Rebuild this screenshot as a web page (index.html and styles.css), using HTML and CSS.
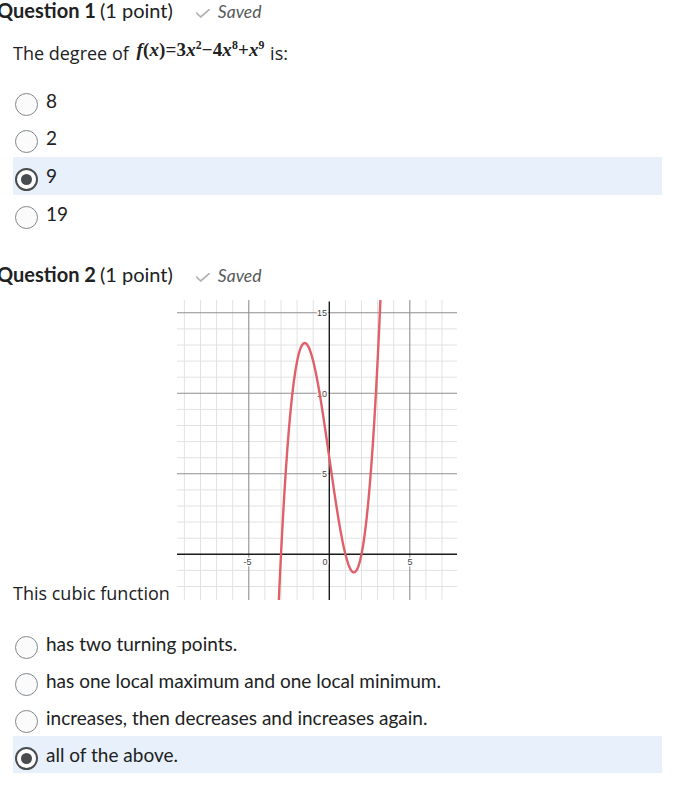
FILE: index.html
```html
<!DOCTYPE html>
<html lang="en">
<head>
<meta charset="utf-8">
<title>Quiz</title>
<link rel="stylesheet" href="styles.css">
</head>
<body>
<div class="page">
  <section class="question q1">
    <div class="q-header">
      <span class="q-title">Question 1</span> <span class="q-points">(1 point)</span>
      <span class="saved">
        <svg class="check" width="14" height="9" viewBox="0 0 14 9"><polyline points="0.8,4.2 4.6,8 13.2,0.6" fill="none" stroke="#b1b4b6" stroke-width="1.7" stroke-linecap="round" stroke-linejoin="round"/></svg>
        <span class="saved-text">Saved</span>
      </span>
    </div>
    <p class="stem">The degree of <span class="math"><i>f</i>(<i>x</i>)=3<i>x</i><sup>2</sup>−4<i>x</i><sup>8</sup>+<i>x</i><sup>9</sup></span> is:</p>
    <ul class="options">
      <li class="option"><span class="radio"></span><span class="label">8</span></li>
      <li class="option"><span class="radio"></span><span class="label">2</span></li>
      <li class="option selected"><span class="radio checked"></span><span class="label">9</span></li>
      <li class="option"><span class="radio"></span><span class="label">19</span></li>
    </ul>
  </section>

  <section class="question q2">
    <div class="q-header">
      <span class="q-title">Question 2</span> <span class="q-points">(1 point)</span>
      <span class="saved">
        <svg class="check" width="14" height="9" viewBox="0 0 14 9"><polyline points="0.8,4.2 4.6,8 13.2,0.6" fill="none" stroke="#b1b4b6" stroke-width="1.7" stroke-linecap="round" stroke-linejoin="round"/></svg>
        <span class="saved-text">Saved</span>
      </span>
    </div>
    <p class="stem graph-stem">This cubic function <svg class="graph" width="280" height="300" viewBox="0 0 280 300">
        <g class="minor" stroke="#e2e2e2" stroke-width="1">
          <line x1="7.4" y1="0" x2="7.4" y2="300"/>
          <line x1="23.5" y1="0" x2="23.5" y2="300"/>
          <line x1="39.6" y1="0" x2="39.6" y2="300"/>
          <line x1="55.7" y1="0" x2="55.7" y2="300"/>
          <line x1="87.9" y1="0" x2="87.9" y2="300"/>
          <line x1="104" y1="0" x2="104" y2="300"/>
          <line x1="120.1" y1="0" x2="120.1" y2="300"/>
          <line x1="136.2" y1="0" x2="136.2" y2="300"/>
          <line x1="168.4" y1="0" x2="168.4" y2="300"/>
          <line x1="184.5" y1="0" x2="184.5" y2="300"/>
          <line x1="200.6" y1="0" x2="200.6" y2="300"/>
          <line x1="216.7" y1="0" x2="216.7" y2="300"/>
          <line x1="248.9" y1="0" x2="248.9" y2="300"/>
          <line x1="265" y1="0" x2="265" y2="300"/>
          <line x1="0" y1="28.9" x2="280" y2="28.9"/>
          <line x1="0" y1="45" x2="280" y2="45"/>
          <line x1="0" y1="61.1" x2="280" y2="61.1"/>
          <line x1="0" y1="77.2" x2="280" y2="77.2"/>
          <line x1="0" y1="109.4" x2="280" y2="109.4"/>
          <line x1="0" y1="125.5" x2="280" y2="125.5"/>
          <line x1="0" y1="141.6" x2="280" y2="141.6"/>
          <line x1="0" y1="157.7" x2="280" y2="157.7"/>
          <line x1="0" y1="189.9" x2="280" y2="189.9"/>
          <line x1="0" y1="206" x2="280" y2="206"/>
          <line x1="0" y1="222.1" x2="280" y2="222.1"/>
          <line x1="0" y1="238.2" x2="280" y2="238.2"/>
          <line x1="0" y1="270.4" x2="280" y2="270.4"/>
          <line x1="0" y1="286.5" x2="280" y2="286.5"/>
        </g>
        <g class="major" stroke="#8f8f8f" stroke-width="1.1">
          <line x1="71.8" y1="0" x2="71.8" y2="300"/>
          <line x1="232.8" y1="0" x2="232.8" y2="300"/>
          <line x1="0" y1="12.8" x2="280" y2="12.8"/>
          <line x1="0" y1="93.3" x2="280" y2="93.3"/>
          <line x1="0" y1="173.8" x2="280" y2="173.8"/>
        </g>
        <g class="axes" stroke="#1a1a1a" stroke-width="1.4">
          <line x1="152.3" y1="1.5" x2="152.3" y2="300"/>
          <line x1="0" y1="254.3" x2="280" y2="254.3"/>
        </g>
        <g class="ticks" font-family="'Liberation Sans', Arial, sans-serif" font-size="9" fill="#444" stroke="#fff" stroke-width="2.5" paint-order="stroke" stroke-linejoin="round">
          <text x="150" y="16" text-anchor="end">15</text>
          <text x="150" y="96.5" text-anchor="end">10</text>
          <text x="150" y="177" text-anchor="end">5</text>
          <text x="148" y="264.5" text-anchor="middle">0</text>
          <text x="70.5" y="264.5" text-anchor="middle">-5</text>
          <text x="233" y="264.5" text-anchor="middle">5</text>
        </g>
        <g transform="translate(152.3 254.3) scale(16.1 -16.1)">
          <path d="M-3.3,-6.837 L-3.2,-4.368 L-3.1,-2.091 L-3,0 L-2.9,1.911 L-2.8,3.648 L-2.7,5.217 L-2.6,6.624 L-2.5,7.875 L-2.4,8.976 L-2.3,9.933 L-2.2,10.752 L-2.1,11.439 L-2,12 L-1.9,12.441 L-1.8,12.768 L-1.7,12.987 L-1.6,13.104 L-1.5,13.125 L-1.4,13.056 L-1.3,12.903 L-1.2,12.672 L-1.1,12.369 L-1,12 L-0.9,11.571 L-0.8,11.088 L-0.7,10.557 L-0.6,9.984 L-0.5,9.375 L-0.4,8.736 L-0.3,8.073 L-0.2,7.392 L-0.1,6.699 L0,6 L0.1,5.301 L0.2,4.608 L0.3,3.927 L0.4,3.264 L0.5,2.625 L0.6,2.016 L0.7,1.443 L0.8,0.912 L0.9,0.429 L1,0 L1.1,-0.369 L1.2,-0.672 L1.3,-0.903 L1.4,-1.056 L1.5,-1.125 L1.6,-1.104 L1.7,-0.987 L1.8,-0.768 L1.9,-0.441 L2,0 L2.1,0.561 L2.2,1.248 L2.3,2.067 L2.4,3.024 L2.5,4.125 L2.6,5.376 L2.7,6.783 L2.8,8.352 L2.9,10.089 L3,12 L3.1,14.091 L3.2,16.368 L3.3,18.837" fill="none" stroke="#e0606a" stroke-width="2.4" stroke-linejoin="round" vector-effect="non-scaling-stroke"/>
        </g>
      </svg></p>
    <ul class="options">
      <li class="option"><span class="radio"></span><span class="label">has two turning points.</span></li>
      <li class="option"><span class="radio"></span><span class="label">has one local maximum and one local minimum.</span></li>
      <li class="option"><span class="radio"></span><span class="label">increases, then decreases and increases again.</span></li>
      <li class="option selected"><span class="radio checked"></span><span class="label">all of the above.</span></li>
    </ul>
  </section>
</div>
</body>
</html>
```

FILE: styles.css
```css
html, body {
  margin: 0;
  padding: 0;
  background: #ffffff;
}

body {
  font-family: Lato, "Noto Sans", sans-serif;
  color: #202122;
}

.page {
  width: 649px;
  padding-left: 13px;
}

.question {
  display: flex;
  flex-direction: column;
}

.q2 {
  margin-top: 32px;
}

.q-header {
  margin-left: -16px;
  font-size: 20px;
  line-height: 20px;
  height: 20px;
  white-space: nowrap;
  display: flex;
  align-items: baseline;
}

.q-title {
  font-weight: 700;
}

.q-points {
  font-weight: 400;
  margin-left: 4px;
}

.saved {
  display: inline-flex;
  align-items: baseline;
  margin-left: 23px;
}

.check {
  margin-right: 8px;
  align-self: center;
  margin-top: 2px;
}

.saved-text {
  font-style: italic;
  font-size: 17.5px;
  color: #55595b;
}

.stem {
  margin: 20px 0 0 0;
  font-family: "Open Sans", "Noto Sans", sans-serif;
  font-size: 18px;
  line-height: 24px;
  color: #202122;
}

.math {
  font-family: "Liberation Serif", "Times New Roman", serif;
  font-weight: 700;
  font-size: 19px;
  line-height: 1;
  vertical-align: 4px;
  letter-spacing: 0.15px;
  margin: 0 1px 0 3px;
}

.math sup {
  font-size: 0.62em;
  line-height: 0;
  vertical-align: 0.6em;
  letter-spacing: 0;
}

.graph-stem {
  margin-top: 16px;
}

.graph {
  display: inline-block;
  vertical-align: baseline;
  margin-left: 2px;
}

.options {
  list-style: none;
  margin: 17px 0 0 0;
  padding: 0;
  display: flex;
  flex-direction: column;
}

.q2 .options {
  margin-top: 20px;
}

.option {
  height: 37.6px;
  display: flex;
  align-items: center;
  font-size: 19px;
}

.q2 .option {
  height: 37px;
}

.option.selected {
  background: #e8f1fb;
}

.radio {
  box-sizing: border-box;
  width: 23px;
  height: 23px;
  border-radius: 50%;
  border: 1px solid #80878b;
  background: #fbfbfb;
  margin-left: 2px;
  margin-right: 8px;
  margin-top: 7px;
  flex: 0 0 auto;
  display: flex;
  align-items: center;
  justify-content: center;
}

.radio.checked {
  border: 2px solid #494c4e;
  background: #ffffff;
}

.radio.checked::after {
  content: "";
  width: 11px;
  height: 11px;
  border-radius: 50%;
  background: #494c4e;
}

.label {
  line-height: 24px;
}
```
